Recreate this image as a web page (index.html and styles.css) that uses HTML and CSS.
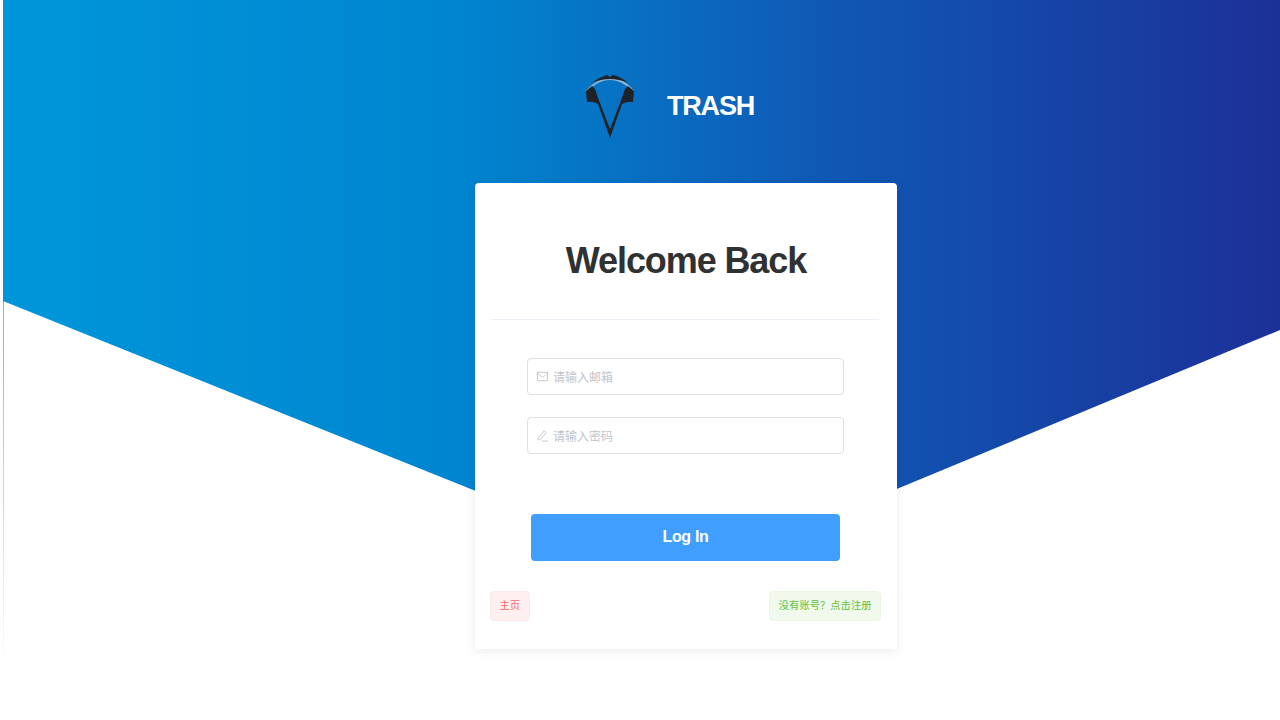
FILE: index.html
```html
<!DOCTYPE html>
<html lang="en">
<head>
    <meta charset="UTF-8">
    <title>Login</title>
    <link rel="stylesheet" href="styles.css">
</head>
<body>
    <div class="bg-strip"></div>
    <div class="bg-shape"></div>

    <div class="brand">
        <svg class="brand-logo" viewBox="0 0 60 72">
            <path d="M6 21 C14 11 23 8 30 8 C38 8 47 11 54 21 L53 22 C46 14 38 10 30 10 C22 10 14 14 7 22 Z" fill="#8fb4d0"/>
            <path d="M12 13 C18 8 24 6 27 5 L30 7 L33 5 C38 6 44 9 48 13 C42 10 36 9 30 9 C24 9 18 10 12 13 Z" fill="#1f2226"/>
            <path d="M30 68 L18 34 Q13 31 7 32 L6 21 L12 16 C15 18 16 21 17 25 L30 59 L43 25 C44 21 45 18 48 16 L54 21 L53 32 Q47 31 42 34 Z" fill="#1f2226"/>
        </svg>
        <span class="brand-name">TRASH</span>
    </div>

    <div class="card">
        <h1 class="card-title">Welcome Back</h1>
        <div class="divider"></div>

        <div class="field">
            <svg class="field-icon" viewBox="0 0 14 14">
                <path d="M1.5 2.5 H12.5 V11.5 H1.5 Z M1.5 3.5 L7 8 L12.5 3.5" fill="none" stroke="#c0c4cc" stroke-width="1"/>
            </svg>
            <span class="placeholder">请输入邮箱</span>
        </div>
        <div class="field">
            <svg class="field-icon" viewBox="0 0 14 14">
                <path d="M2 10 L3 12 L5 11 L11 4 L9 2 Z M6 13 H13" fill="none" stroke="#c0c4cc" stroke-width="1"/>
            </svg>
            <span class="placeholder">请输入密码</span>
        </div>

        <button class="login-btn">Log In</button>

        <div class="links">
            <span class="tag tag-red">主页</span>
            <span class="tag tag-green">没有账号？点击注册</span>
        </div>
    </div>
</body>
</html>
```

FILE: styles.css
```css
* {
    margin: 0;
    padding: 0;
    box-sizing: border-box;
}

html, body {
    height: 720px;
    overflow: hidden;
}

body {
    font-family: "Liberation Sans", "Noto Sans CJK SC", sans-serif;
    background: #fff;
    color: #303133;
}

/* blue banner with the v-shaped bottom */
.bg-shape {
    position: absolute;
    top: 0;
    left: 3px;
    width: 1277px;
    height: 580px;
    background: linear-gradient(90deg, #0096da 0%, #0086d0 35%, #1058b4 65%, #1c3098 100%);
    clip-path: polygon(0 0, 100% 0, 100% 330px, 684px 576px, 0 301px);
}

.bg-strip {
    position: absolute;
    top: 301px;
    left: 3px;
    width: 1px;
    height: 370px;
    background: linear-gradient(180deg, #7fb0ea, #ffffff);
}

.brand {
    position: relative;
    display: flex;
    align-items: center;
    height: 72px;
    margin: 70px 0 0 580px;
}

.brand-logo {
    width: 60px;
    height: 72px;
}

.brand-name {
    margin-left: 27px;
    font-size: 27px;
    font-weight: bold;
    letter-spacing: -1.2px;
    color: #fff;
}

.card {
    position: relative;
    width: 422px;
    height: 466px;
    margin: 41px 0 0 475px;
    padding: 0 16px;
    background: #fff;
    border-radius: 4px;
    box-shadow: 0 2px 12px rgba(0, 0, 0, 0.08);
}

.card-title {
    padding-top: 57px;
    height: 136px;
    font-size: 36px;
    line-height: 42px;
    font-weight: bold;
    letter-spacing: -1.1px;
    text-align: center;
    color: #303133;
}

.divider {
    height: 1px;
    background: #ebeef5;
    margin-right: 2px;
}

.field {
    display: flex;
    align-items: center;
    width: 317px;
    height: 37px;
    margin: 38px 0 0 36px;
    padding-left: 8px;
    background: #fff;
    border: 1px solid #dcdfe6;
    border-radius: 4px;
}

.field + .field {
    margin-top: 22px;
}

.field-icon {
    width: 13px;
    height: 13px;
    margin-right: 4px;
}

.placeholder {
    font-size: 12px;
    color: #c0c4cc;
}

.login-btn {
    display: block;
    width: 309px;
    height: 47px;
    margin: 60px 0 0 40px;
    padding-bottom: 2px;
    background: #409eff;
    border: 0;
    border-radius: 4px;
    color: #fff;
    font-family: inherit;
    font-size: 16px;
    font-weight: bold;
    letter-spacing: -0.3px;
}

.links {
    display: flex;
    justify-content: space-between;
    align-items: center;
    margin: 30px 0 0 -1px;
}

.tag {
    height: 30px;
    line-height: 28px;
    padding: 0 8.5px;
    font-size: 10.3px;
    border-radius: 4px;
    border: 1px solid;
}

.tag-red {
    background: #fef0f0;
    border-color: #fbeaea;
    color: #f56c6c;
}

.tag-green {
    background: #f0f9eb;
    border-color: #e9f6e2;
    color: #67c23a;
}
```
